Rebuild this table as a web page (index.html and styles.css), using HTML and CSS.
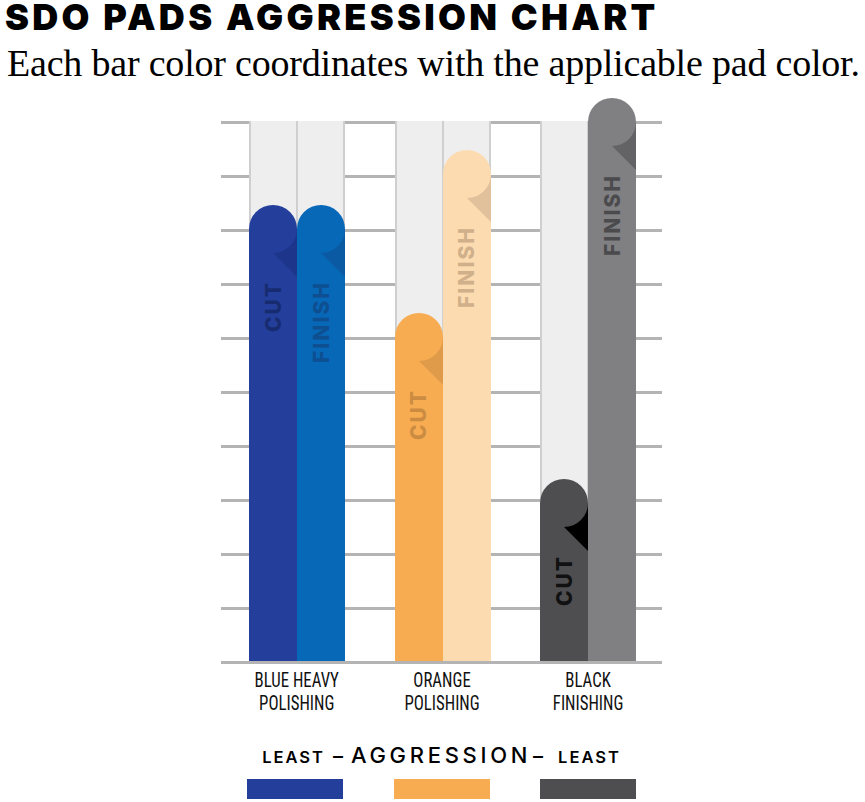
FILE: index.html
```html
<!DOCTYPE html>
<html lang="en">
<head>
<meta charset="utf-8">
<title>SDO Pads Aggression Chart</title>
<link rel="stylesheet" href="styles.css">
</head>
<body>
<header class="intro">
  <h1 class="title">SDO PADS AGGRESSION CHART</h1>
  <p class="subtitle">Each bar color coordinates with the applicable pad color.</p>
</header>
<section class="chart">
  <div class="plot">
    <div class="group">
      <div class="slot">
        <div class="bar bar-blue-cut" style="height:456px">
          <svg class="fold" viewBox="0 0 48 72"><path d="M48 24V72L24 48A24 24 0 0 0 48 24Z"/></svg>
          <span class="bar-label">CUT</span>
        </div>
      </div>
      <div class="slot">
        <div class="bar bar-blue-finish" style="height:456px">
          <svg class="fold" viewBox="0 0 48 72"><path d="M48 24V72L24 48A24 24 0 0 0 48 24Z"/></svg>
          <span class="bar-label">FINISH</span>
        </div>
      </div>
    </div>
    <div class="group">
      <div class="slot">
        <div class="bar bar-orange-cut" style="height:348px">
          <svg class="fold" viewBox="0 0 48 72"><path d="M48 24V72L24 48A24 24 0 0 0 48 24Z"/></svg>
          <span class="bar-label">CUT</span>
        </div>
      </div>
      <div class="slot">
        <div class="bar bar-orange-finish" style="height:511px">
          <svg class="fold" viewBox="0 0 48 72"><path d="M48 24V72L24 48A24 24 0 0 0 48 24Z"/></svg>
          <span class="bar-label">FINISH</span>
        </div>
      </div>
    </div>
    <div class="group">
      <div class="slot">
        <div class="bar bar-black-cut" style="height:182px">
          <svg class="fold" viewBox="0 0 48 72"><path d="M48 24V72L24 48A24 24 0 0 0 48 24Z"/></svg>
          <span class="bar-label">CUT</span>
        </div>
      </div>
      <div class="slot">
        <div class="bar bar-black-finish" style="height:563px">
          <svg class="fold" viewBox="0 0 48 72"><path d="M48 24V72L24 48A24 24 0 0 0 48 24Z"/></svg>
          <span class="bar-label">FINISH</span>
        </div>
      </div>
    </div>
  </div>
  <div class="axis">
    <div class="axis-label"><span class="axis-text">BLUE HEAVY<br>POLISHING</span></div>
    <div class="axis-label"><span class="axis-text">ORANGE<br>POLISHING</span></div>
    <div class="axis-label"><span class="axis-text">BLACK<br>FINISHING</span></div>
  </div>
  <div class="legend-title">
    <span class="least least-left">LEAST</span><span class="dash dash-left">–</span><span class="aggr">AGGRESSION</span><span class="dash dash-right">–</span><span class="least">LEAST</span>
  </div>
  <div class="swatches">
    <span class="swatch swatch-blue"></span>
    <span class="swatch swatch-orange"></span>
    <span class="swatch swatch-black"></span>
  </div>
</section>
</body>
</html>
```
FILE: styles.css
```css
html, body {
  margin: 0;
  padding: 0;
  background: #ffffff;
  color: #000000;
}

.intro {
  padding-left: 5px;
}

.title {
  margin: 0;
  font-family: "Inter", "Liberation Sans", sans-serif;
  font-weight: 900;
  font-size: 36px;
  line-height: 34px;
  letter-spacing: 3.3px;
  white-space: nowrap;
}

.subtitle {
  margin: 7px 0 0 2px;
  font-family: "Liberation Serif", serif;
  font-size: 38px;
  line-height: 44px;
  letter-spacing: -0.2px;
  white-space: nowrap;
}

.chart {
  padding-top: 12px;
}

.plot {
  margin-left: 221px;
  width: 441px;
  height: 567px;
  box-sizing: border-box;
  padding: 0 26px 3px 28px;
  display: flex;
  justify-content: space-between;
  align-items: flex-end;
  background-image: repeating-linear-gradient(to bottom, #b4b4b4 0 3px, transparent 3px 54px);
  background-position: 0 24px;
}

.group {
  display: flex;
  height: 540px;
  width: 96px;
  background: linear-gradient(to right,
    #cfcfcf 0 2px, #eeeeef 2px 47px,
    #cfcfcf 47px 49px, #eeeeef 49px 94px,
    #cfcfcf 94px 96px);
}

.slot {
  width: 48px;
  display: flex;
  flex-direction: column;
  justify-content: flex-end;
}

.bar {
  position: relative;
  flex-shrink: 0;
  width: 48px;
  border-radius: 24px 24px 0 0;
  display: flex;
  flex-direction: column;
  align-items: center;
}

.fold {
  position: absolute;
  top: 0;
  left: 0;
  width: 48px;
  height: 72px;
  fill: currentColor;
}

.bar-label {
  margin-top: 76px;
  writing-mode: vertical-rl;
  transform: rotate(180deg);
  font-family: "Inter", "Liberation Sans", sans-serif;
  font-weight: 800;
  font-size: 21px;
  line-height: 21px;
  letter-spacing: 2px;
  white-space: nowrap;
}

.bar-blue-cut { background: #243f9b; color: #1d358a; }
.bar-blue-cut .bar-label { color: #172c70; }
.bar-blue-finish { background: #0868b8; color: #0a5aa3; }
.bar-blue-finish .bar-label { color: #0d4f91; }
.bar-orange-cut { background: #f8ac52; color: #df9a4a; }
.bar-orange-cut .bar-label { color: #cb8c42; }
.bar-orange-finish { background: #fddbb0; color: #e1c19c; }
.bar-orange-finish .bar-label { color: #d0b08a; }
.bar-black-cut { background: #4e4e50; color: #000000; }
.bar-black-cut .bar-label { color: #111111; }
.bar-black-finish { background: #808083; color: #636366; }
.bar-black-finish .bar-label { color: #4b4b4d; }

.axis {
  margin: 5px 0 0 221px;
  width: 441px;
  box-sizing: border-box;
  padding: 0 26px 0 28px;
  display: flex;
  justify-content: space-between;
}

.axis-label {
  width: 96px;
  display: flex;
  justify-content: center;
}

.axis-text {
  display: block;
  text-align: center;
  white-space: nowrap;
  font-family: "Liberation Sans Narrow", "Roboto Condensed", "DejaVu Sans Condensed", "Liberation Sans", sans-serif;
  font-size: 21px;
  line-height: 23px;
  color: #111;
  transform: scaleX(0.8);
}

.legend-title {
  margin: 27px 0 0 221px;
  width: 441px;
  height: 26px;
  display: flex;
  justify-content: center;
  align-items: baseline;
  font-family: "Inter", "Liberation Sans", sans-serif;
  white-space: nowrap;
  line-height: 26px;
}

.least {
  font-size: 16.5px;
  font-weight: 600;
  letter-spacing: 2px;
}

.least-left {
  margin-right: 8px;
}

.dash {
  font-size: 20px;
  font-weight: 500;
}

.dash-left {
  margin-right: 8px;
}

.dash-right {
  margin-right: 15px;
}

.aggr {
  font-size: 22px;
  font-weight: 500;
  letter-spacing: 3.7px;
  margin-right: 2px;
}

.swatches {
  margin: 11px 0 0 221px;
  width: 441px;
  box-sizing: border-box;
  padding: 0 26px;
  display: flex;
  justify-content: space-between;
}

.swatch {
  width: 96px;
  height: 20px;
}

.swatch-blue { background: #243f9b; }
.swatch-orange { background: #f8ac52; }
.swatch-black { background: #4e4e50; }
```
